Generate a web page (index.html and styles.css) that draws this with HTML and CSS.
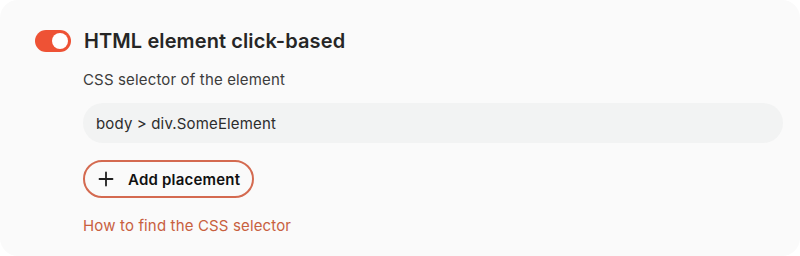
FILE: index.html
```html
<!DOCTYPE html>
<html>
<head>
<meta charset="utf-8">
<link rel="stylesheet" href="styles.css">
</head>
<body>
<div class="card">
  <div class="header">
    <span class="toggle"><span class="knob"></span></span>
    <h2 class="title">HTML element click-based</h2>
  </div>
  <div class="body">
    <div class="label">CSS selector of the element</div>
    <div class="input">body &gt; div.SomeElement</div>
    <button class="btn">
      <svg class="plus" width="16" height="16" viewBox="0 0 16 16"><path d="M8 1.5v13M1.5 8h13" stroke="#1f1f1f" stroke-width="1.8" stroke-linecap="round" fill="none"/></svg>
      <span>Add placement</span>
    </button>
    <a class="link" href="#">How to find the CSS selector</a>
  </div>
</div>
</body>
</html>
```
FILE: styles.css
```css
html, body {
  margin: 0;
  padding: 0;
  background: #ffffff;
}
body {
  font-family: Inter, "Noto Sans", sans-serif;
  width: 800px;
  height: 256px;
  overflow: hidden;
}
.card {
  box-sizing: border-box;
  width: 800px;
  height: 256px;
  background: #fafafa;
  border-radius: 18px;
  padding: 28px 17px 0 35px;
}
.header {
  display: flex;
  align-items: center;
  gap: 13px;
  height: 26px;
}
.toggle {
  box-sizing: border-box;
  width: 36px;
  height: 22px;
  border-radius: 11px;
  background: #ee5235;
  display: flex;
  align-items: center;
  justify-content: flex-end;
  padding-right: 3px;
}
.knob {
  width: 16px;
  height: 16px;
  border-radius: 50%;
  background: #ffffff;
}
.title {
  margin: 0;
  font-size: 20px;
  font-weight: 600;
  color: #262626;
  letter-spacing: 0.1px;
}
.body {
  padding-left: 48px;
  display: flex;
  flex-direction: column;
  align-items: flex-start;
}
.label {
  margin-top: 16px;
  font-size: 15px;
  color: #3c3c3c;
  line-height: 20px;
  letter-spacing: 0.15px;
}
.input {
  box-sizing: border-box;
  margin-top: 13px;
  width: 700px;
  height: 40px;
  border-radius: 20px;
  background: #f2f3f3;
  padding-left: 13px;
  display: flex;
  align-items: center;
  font-size: 15px;
  color: #2d2d2d;
  letter-spacing: 0.15px;
}
.btn {
  box-sizing: border-box;
  margin-top: 17px;
  height: 38px;
  width: 171px;
  border: 2px solid #d46a50;
  border-radius: 19px;
  background: #fafafa;
  display: flex;
  align-items: center;
  padding: 0 0 0 13px;
  gap: 14px;
  font-family: inherit;
  font-size: 15px;
  font-weight: 600;
  color: #111111;
  letter-spacing: 0.2px;
}
.plus {
  flex: none;
}
.link {
  margin-top: 18px;
  font-size: 15px;
  color: #c8603f;
  text-decoration: none;
  line-height: 20px;
  letter-spacing: 0.15px;
}
```
